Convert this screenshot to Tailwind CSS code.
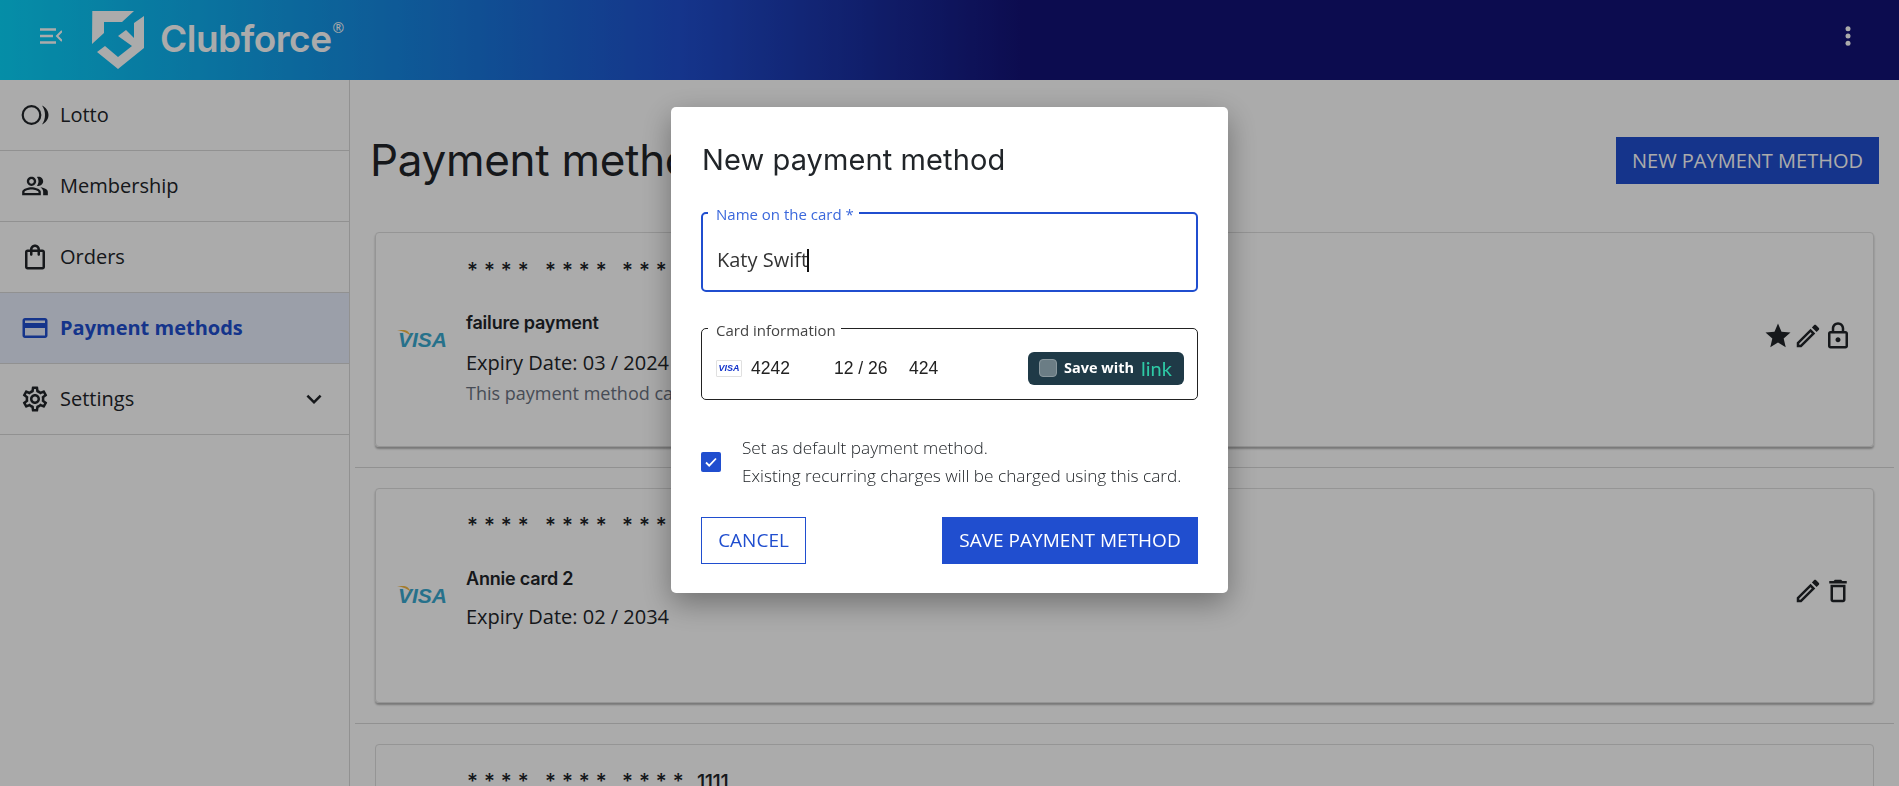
<!DOCTYPE html>
<html lang="en">
<head>
  <meta charset="UTF-8">
  <meta name="viewport" content="width=device-width, initial-scale=1">
  <title>Payment methods</title>
  <script src="https://cdn.jsdelivr.net/npm/@tailwindcss/browser@4"></script>
</head>
<body class="h-screen overflow-hidden bg-white text-[#212529] [font-family:'Open_Sans',sans-serif]">

  <!-- Header -->
  <header class="h-[80px] flex items-center justify-between pl-[40px] pr-[39px] pb-[8px] bg-[linear-gradient(90deg,#08d4fa_0%,#204ecf_36%,#131276_54%,#131276_100%)] text-white">
    <div class="flex items-center">
      <svg class="w-[22px] h-[16px]" viewBox="0 0 22 16" fill="none" stroke="white" stroke-width="2.4">
        <path d="M0 1.5h16M0 8h13M0 14.500h16"/>
        <path d="M22 3l-5 5 5 5" stroke-width="2"/>
      </svg>
      <svg class="w-[70px] h-[70px] ml-[23px] mt-[8px]" viewBox="0 0 70 70" fill="white">
        <polygon points="7.300,6 49,6 37,17 19,17 19,28 7,39"/>
        <polygon points="33,31 41,25 49,33 49,18 59,11 59,43 33,64 12,47 20,41 33,52 47,41"/>
      </svg>
      <span class="ml-[5px] mt-[4px] text-[37px] leading-none font-semibold [font-family:'Inter',sans-serif] tracking-[-0.5px]">Clubforce</span>
      <span class="text-[14px] leading-none self-start mt-[24px] ml-[1px]">®</span>
    </div>
    <svg class="w-[24px] h-[24px]" viewBox="0 0 24 24" fill="white"><circle cx="12" cy="4.700" r="2.500"/><circle cx="12" cy="12" r="2.500"/><circle cx="12" cy="19.300" r="2.500"/></svg>
  </header>

  <div class="flex h-[706px]">
    <!-- Sidebar -->
    <aside class="w-[350px] shrink-0 border-r border-[#d9d9d9] text-[20px]">
      <a class="h-[71px] flex items-center gap-[10px] px-[20px] border-b border-[#d9d9d9]">
        <svg class="w-[30px] h-[30px]" viewBox="0 0 30 30" fill="none" stroke="currentColor" stroke-width="2.200"><circle cx="11.500" cy="15" r="8.800"/><path d="M22 5.500c4 2 6.500 5.500 6.500 9.500s-2.500 7.500-6.500 9.500c2-2.800 3-6 3-9.500s-1-6.700-3-9.500z" fill="currentColor" stroke="none"/></svg>
        <span>Lotto</span>
      </a>
      <a class="h-[71px] flex items-center gap-[10px] px-[20px] border-b border-[#d9d9d9]">
        <span class="w-[30px] flex justify-center"><svg class="w-[28px] h-[28px]" viewBox="0 0 24 24" fill="currentColor"><path d="M16.670 13.130C18.040 14.060 19 15.320 19 17v3h4v-3c0-2.180-3.570-3.470-6.330-3.870zM15 12c2.210 0 4-1.790 4-4s-1.790-4-4-4c-.47 0-.91.1-1.330.24C14.500 5.270 15 6.580 15 8s-.5 2.730-1.330 3.760c.42.14.86.24 1.330.24zM9 12c2.210 0 4-1.790 4-4s-1.790-4-4-4-4 1.790-4 4 1.790 4 4 4zm0-6c1.100 0 2 .9 2 2s-.9 2-2 2-2-.9-2-2 .9-2 2-2zM9 13c-2.670 0-8 1.340-8 4v3h16v-3c0-2.660-5.330-4-8-4zm6 5H3v-.99C3.200 16.290 6.300 15 9 15s5.800 1.290 6 2v1z"/></svg></span>
        <span>Membership</span>
      </a>
      <a class="h-[71px] flex items-center gap-[10px] px-[20px] border-b border-[#d9d9d9]">
        <svg class="w-[30px] h-[30px]" viewBox="0 0 24 24" fill="currentColor"><path d="M18 6h-2c0-2.210-1.790-4-4-4S8 3.790 8 6H6c-1.100 0-2 .9-2 2v12c0 1.100.9 2 2 2h12c1.100 0 2-.9 2-2V8c0-1.100-.9-2-2-2zm-6-2c1.100 0 2 .9 2 2h-4c0-1.100.9-2 2-2zm6 16H6V8h2v2c0 .55.45 1 1 1s1-.45 1-1V8h4v2c0 .55.45 1 1 1s1-.45 1-1V8h2v12z"/></svg>
        <span>Orders</span>
      </a>
      <a class="h-[71px] flex items-center gap-[10px] px-[20px] border-b border-[#d9d9d9] bg-[#e7edfd] text-[#204ecf] font-bold">
        <svg class="w-[30px] h-[30px]" viewBox="0 0 24 24" fill="currentColor"><path d="M20 4H4c-1.110 0-1.990.89-1.990 2L2 18c0 1.110.89 2 2 2h16c1.110 0 2-.89 2-2V6c0-1.110-.89-2-2-2zm0 14H4v-6h16v6zm0-10H4V6h16v2z"/></svg>
        <span>Payment methods</span>
      </a>
      <a class="h-[71px] flex items-center gap-[10px] pl-[20px] pr-[20px] border-b border-[#d9d9d9]">
        <svg class="w-[30px] h-[30px]" viewBox="0 0 24 24" fill="currentColor"><path d="M19.430 12.980c.04-.32.07-.64.07-.98 0-.34-.03-.66-.07-.98l2.110-1.650c.19-.15.24-.42.12-.64l-2-3.460c-.09-.16-.26-.25-.44-.25-.06 0-.12.01-.17.03l-2.490 1c-.52-.4-1.080-.73-1.690-.98l-.38-2.650C14.460 2.180 14.250 2 14 2h-4c-.25 0-.46.18-.49.42l-.38 2.650c-.61.25-1.170.59-1.690.98l-2.490-1c-.06-.02-.12-.03-.18-.03-.17 0-.34.09-.43.25l-2 3.460c-.13.22-.07.49.12.64l2.110 1.650c-.04.32-.07.65-.07.98 0 .33.03.66.07.98l-2.110 1.650c-.19.15-.24.42-.12.64l2 3.460c.09.16.26.25.44.25.06 0 .12-.01.17-.03l2.490-1c.52.4 1.080.73 1.690.98l.38 2.650c.03.24.24.42.49.42h4c.25 0 .46-.18.49-.42l.38-2.650c.61-.25 1.170-.59 1.690-.98l2.490 1c.06.02.12.03.18.03.17 0 .34-.09.43-.25l2-3.460c.12-.22.07-.49-.12-.64l-2.110-1.650zm-1.980-1.710c.04.31.05.52.05.73 0 .21-.02.43-.05.73l-.14 1.130.89.7 1.080.84-.7 1.210-1.270-.51-1.040-.42-.9.68c-.43.32-.84.56-1.250.73l-1.060.43-.16 1.130-.2 1.350h-1.400l-.19-1.350-.16-1.130-1.060-.43c-.43-.18-.83-.41-1.230-.71l-.91-.7-1.060.43-1.270.51-.7-1.210 1.080-.84.89-.7-.14-1.130c-.03-.31-.05-.54-.05-.74s.02-.43.05-.73l.14-1.130-.89-.7-1.080-.84.7-1.210 1.270.51 1.040.42.9-.68c.43-.32.84-.56 1.250-.73l1.060-.43.16-1.130.2-1.350h1.390l.19 1.350.16 1.130 1.060.43c.43.18.83.41 1.230.71l.91.7 1.060-.43 1.270-.51.7 1.210-1.070.85-.89.7.14 1.130zM12 8c-2.210 0-4 1.790-4 4s1.790 4 4 4 4-1.790 4-4-1.790-4-4-4zm0 6c-1.100 0-2-.9-2-2s.9-2 2-2 2 .9 2 2-.9 2-2 2z"/></svg>
        <span class="flex-1">Settings</span>
        <svg class="w-[30px] h-[30px]" viewBox="0 0 24 24" fill="currentColor"><path d="M16.590 8.590L12 13.170 7.410 8.590 6 10l6 6 6-6z"/></svg>
      </a>
    </aside>

    <!-- Main -->
    <main class="flex-1 min-w-0">
      <div class="flex items-start justify-between pl-[20px] pr-[20px] pt-[57px] h-[132px]">
        <h1 class="text-[44px] leading-[47px] font-normal [font-family:'Inter',sans-serif] tracking-[-0.3px]">Payment methods</h1>
        <button class="h-[47px] w-[263px] bg-[#204ecf] text-white text-[20px]">NEW PAYMENT METHOD</button>
      </div>

      <div class="mx-[5px]">
        <!-- Card 1 -->
        <div class="py-[20px] px-[20px] border-b border-[#d9d9d9]">
          <div class="h-[215px] flex rounded-[4px] border border-[#dedede] shadow-[0_2px_2px_rgba(0,0,0,0.3)]">
            <div class="w-[71px] flex items-center justify-end shrink-0">
              <span class="relative text-[21px] leading-none italic font-bold text-[#3aa9cf] [font-family:'Liberation_Sans',sans-serif]">VISA<svg class="absolute left-[-1px] top-[1px] w-[14px] h-[6px]" viewBox="0 0 14 6" fill="#f5b942"><path d="M0 0h7c3 0 5 2 7 6C11 3 6 1 0 0z"/></svg></span>
            </div>
            <div class="flex-1 min-w-0 pl-[19px]">
              <div class="flex items-center h-[20px] mt-[28px] ml-[1px] text-[21px] font-medium [font-family:'Inter',sans-serif]">
                <span class="w-[78px] tracking-[6px]">****</span>
                <span class="w-[77px] tracking-[6px]">****</span>
                <span class="w-[75px] tracking-[6px]">****</span>
                <span class="text-[20px] tracking-[-0.5px]">1111</span>
              </div>
              <div class="mt-[32px] h-[20px] leading-[20px] text-[18px] font-semibold [font-family:'Inter',sans-serif] tracking-[-0.2px]">failure payment</div>
              <div class="mt-[18px] h-[24px] leading-[24px] text-[20px]">Expiry Date: 03 / 2024</div>
              <div class="mt-[6px] h-[24px] leading-[24px] text-[18px] text-[#6b7280]">This payment method cannot be deleted</div>
            </div>
            <div class="flex items-center pr-[20px] mb-[8px]">
              <svg class="w-[30px] h-[30px]" viewBox="0 0 24 24" fill="currentColor"><path d="M12 17.270L18.180 21l-1.640-7.030L22 9.240l-7.190-.61L12 2 9.190 8.630 2 9.240l5.460 4.730L5.820 21z"/></svg>
              <svg class="w-[30px] h-[30px]" viewBox="0 0 24 24" fill="currentColor"><path d="M14.060 9.020l.92.92L5.920 19H5v-.92l9.060-9.060M17.660 3c-.25 0-.51.1-.7.29l-1.830 1.830 3.750 3.750 1.830-1.830c.39-.39.39-1.020 0-1.410l-2.340-2.340c-.2-.2-.45-.29-.71-.29zm-3.600 3.190L3 17.250V21h3.750L17.810 9.940l-3.750-3.750z"/></svg>
              <svg class="w-[30px] h-[30px]" viewBox="0 0 24 24" fill="currentColor"><path d="M18 8h-1V6c0-2.760-2.240-5-5-5S7 3.240 7 6v2H6c-1.100 0-2 .9-2 2v10c0 1.100.9 2 2 2h12c1.100 0 2-.9 2-2V10c0-1.100-.9-2-2-2zM9 6c0-1.660 1.340-3 3-3s3 1.340 3 3v2H9V6zm9 14H6V10h12v10zm-6-3c1.100 0 2-.9 2-2s-.9-2-2-2-2 .9-2 2 .9 2 2 2z"/></svg>
            </div>
          </div>
        </div>
        <!-- Card 2 -->
        <div class="py-[20px] px-[20px] border-b border-[#d9d9d9]">
          <div class="h-[215px] flex rounded-[4px] border border-[#dedede] shadow-[0_2px_2px_rgba(0,0,0,0.3)]">
            <div class="w-[71px] flex items-center justify-end shrink-0">
              <span class="relative text-[21px] leading-none italic font-bold text-[#3aa9cf] [font-family:'Liberation_Sans',sans-serif]">VISA<svg class="absolute left-[-1px] top-[1px] w-[14px] h-[6px]" viewBox="0 0 14 6" fill="#f5b942"><path d="M0 0h7c3 0 5 2 7 6C11 3 6 1 0 0z"/></svg></span>
            </div>
            <div class="flex-1 min-w-0 pl-[19px]">
              <div class="flex items-center h-[20px] mt-[27px] ml-[1px] text-[21px] font-medium [font-family:'Inter',sans-serif]">
                <span class="w-[78px] tracking-[6px]">****</span>
                <span class="w-[77px] tracking-[6px]">****</span>
                <span class="w-[75px] tracking-[6px]">****</span>
                <span class="text-[20px] tracking-[-0.5px]">4242</span>
              </div>
              <div class="mt-[33px] h-[20px] leading-[20px] text-[18px] font-semibold [font-family:'Inter',sans-serif] tracking-[-0.2px]">Annie card 2</div>
              <div class="mt-[16px] h-[24px] leading-[24px] text-[20px]">Expiry Date: 02 / 2034</div>
            </div>
            <div class="flex items-center pr-[20px] mb-[10px]">
              <svg class="w-[30px] h-[30px]" viewBox="0 0 24 24" fill="currentColor"><path d="M14.060 9.020l.92.92L5.920 19H5v-.92l9.060-9.060M17.660 3c-.25 0-.51.1-.7.29l-1.830 1.830 3.750 3.750 1.830-1.830c.39-.39.39-1.020 0-1.410l-2.340-2.340c-.2-.2-.45-.29-.71-.29zm-3.600 3.190L3 17.250V21h3.750L17.810 9.940l-3.750-3.750z"/></svg>
              <svg class="w-[30px] h-[30px]" viewBox="0 0 24 24" fill="currentColor"><path d="M16 9v10H8V9h8m-1.500-6h-5l-1 1H5v2h14V4h-3.500l-1-1zM18 7H6v12c0 1.100.9 2 2 2h8c1.100 0 2-.9 2-2V7z"/></svg>
            </div>
          </div>
        </div>
        <!-- Card 3 -->
        <div class="py-[20px] px-[20px]">
          <div class="h-[215px] flex rounded-[4px] border border-[#dedede]">
            <div class="w-[71px] shrink-0"></div>
            <div class="flex-1 min-w-0 pl-[19px]">
              <div class="flex items-center h-[20px] mt-[27px] ml-[1px] text-[21px] font-medium [font-family:'Inter',sans-serif]">
                <span class="w-[78px] tracking-[6px]">****</span>
                <span class="w-[77px] tracking-[6px]">****</span>
                <span class="w-[75px] tracking-[6px]">****</span>
                <span class="text-[20px] tracking-[-0.5px]">1111</span>
              </div>
            </div>
          </div>
        </div>
      </div>
    </main>
  </div>

  <!-- Backdrop -->
  <div class="fixed inset-0 bg-black/[0.33]"></div>

  <!-- Dialog -->
  <div class="fixed left-[671px] top-[107px] w-[557px] h-[486px] bg-white rounded-[5px] shadow-[0_10px_30px_rgba(0,0,0,0.35)] px-[30px] pt-[35px]">
    <h2 class="ml-[1px] text-[29px] leading-[36px] font-normal [font-family:'Inter',sans-serif] tracking-[0.1px] text-[#212529]">New payment method</h2>

    <fieldset class="mt-[27px] h-[87px] border-2 border-[#204ecf] rounded-[5px] px-[5px]">
      <legend class="pl-[8px] pr-[5px] text-[15px] leading-[15px] text-[#3b68dc]"><span class="block translate-y-[2px]">Name on the card *</span></legend>
      <div class="flex items-center h-[70px] pt-[10px] text-[20px] text-[#333] pl-[9px]">Katy Swift<span class="w-[2px] h-[23px] bg-[#111] -ml-[1px]"></span></div>
    </fieldset>

    <fieldset class="mt-[29px] h-[79px] border border-[#222] rounded-[5px] px-[6px]">
      <legend class="pl-[8px] pr-[5px] text-[15px] leading-[15px] text-[#444]"><span class="block translate-y-[2px]">Card information</span></legend>
      <div class="flex items-center justify-between h-[63px] pl-[8px] pr-[7px]">
        <div class="flex items-center mt-[2px] text-[17.500px] text-[#222] [font-family:'Liberation_Sans',sans-serif]">
          <span class="w-[26px] h-[17px] flex items-center justify-center border border-[#e0e0e0] rounded-[1px] text-[9px] italic font-bold text-[#1434cb]">VISA</span>
          <span class="ml-[9px] w-[83px]">4242</span>
          <span class="w-[75px]">12 / 26</span>
          <span>424</span>
        </div>
        <div class="w-[156px] h-[33px] mt-[1px] rounded-[6px] bg-[#1f3a47] flex items-center pl-[11px]">
          <span class="w-[18px] h-[18px] rounded-[4px] bg-[#6b7d85] border border-[#8a989e]"></span>
          <span class="ml-[7px] text-[14.500px] font-bold text-white">Save with</span>
          <span class="ml-[7px] text-[20px] leading-none font-normal text-[#2ec9a5] [font-family:'Lato',sans-serif]">link</span>
        </div>
      </div>
    </fieldset>

    <div class="mt-[34px] flex items-center">
      <span class="w-[20px] h-[20px] rounded-[2px] bg-[#204ecf] flex items-center justify-center">
        <svg class="w-[16px] h-[16px]" viewBox="0 0 16 16" fill="none" stroke="white" stroke-width="1.800"><path d="M3 8.500l3.200 3.200L13 4.500"/></svg>
      </span>
      <div class="ml-[21px] text-[17.200px] leading-[28px] font-light text-[#212529]">
        <p>Set as default payment method.</p>
        <p>Existing recurring charges will be charged using this card.</p>
      </div>
    </div>

    <div class="mt-[27px] flex justify-between">
      <button class="h-[47px] w-[105px] border border-[#204ecf] text-[#204ecf] text-[19px]">CANCEL</button>
      <button class="h-[47px] w-[256px] bg-[#204ecf] text-white text-[19px]">SAVE PAYMENT METHOD</button>
    </div>
  </div>

</body>
</html>
